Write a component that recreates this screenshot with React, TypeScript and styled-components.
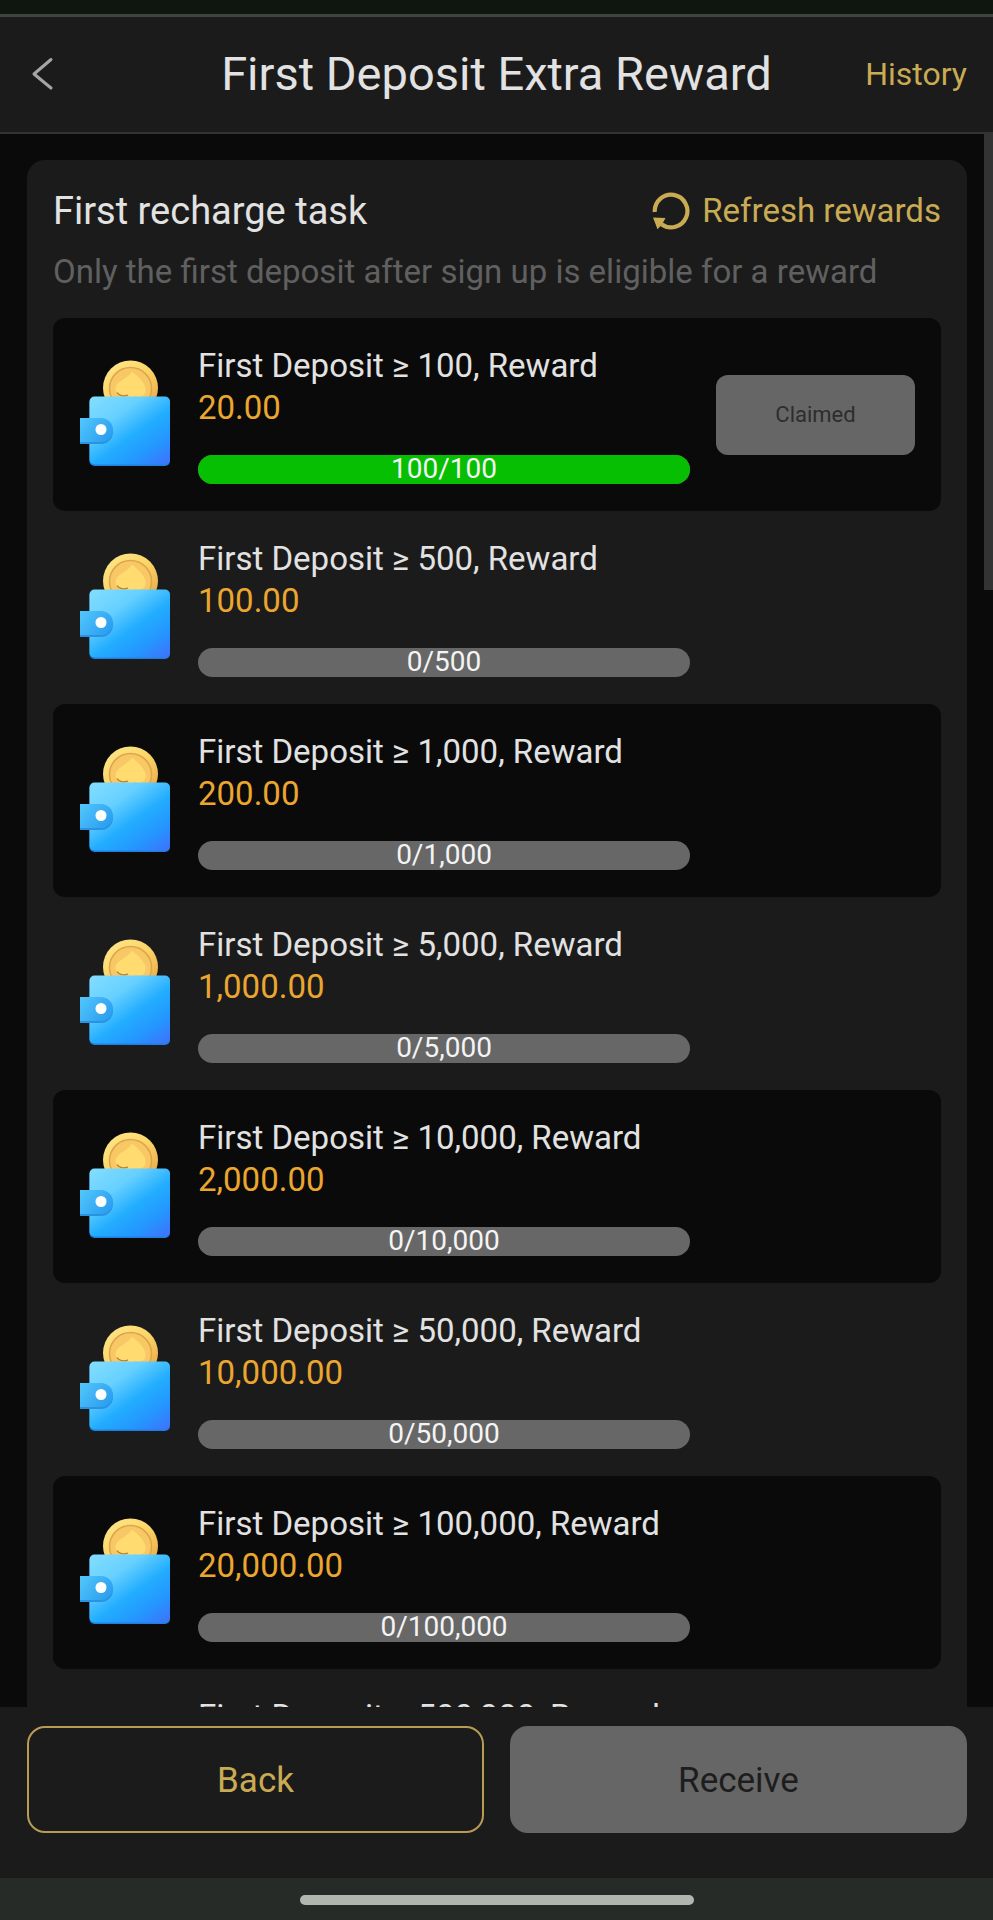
import React from 'react';
import styled, { createGlobalStyle } from 'styled-components';

const color = {
  page: '#0a0a0a',
  surface: '#1b1b1b',
  text: '#e2e2e2',
  muted: '#606060',
  gold: '#c9ab54',
  amount: '#eba62f',
  disabled: '#666666',
  track: '#676767',
  done: '#06bf02',
};

const GlobalStyle = createGlobalStyle`
  * { box-sizing: border-box; }
  body {
    margin: 0;
    background: ${color.page};
    color: ${color.text};
    font-family: Roboto, "Liberation Sans", sans-serif;
  }
  button { font-family: inherit; }
  h1, h2, p, ul { margin: 0; padding: 0; font-weight: 400; }
`;

const Screen = styled.div`
  display: flex;
  flex-direction: column;
  height: 100vh;
`;

const StatusStrip = styled.div`
  flex: none;
  height: 17px;
  background: #0f150f;
  border-bottom: 3px solid #40443f;
`;

const Header = styled.header`
  flex: none;
  display: grid;
  grid-template-columns: 1fr auto 1fr;
  align-items: center;
  height: 117px;
  padding: 0 26px 2px;
  background: ${color.surface};
  border-bottom: 2px solid #333333;
`;

const Title = styled.h1`
  font-size: 47px;
  line-height: 56px;
`;

const IconButton = styled.button`
  justify-self: start;
  display: flex;
  padding: 0;
  border: 0;
  background: none;
  color: #a5a5a5;
`;

const HistoryLink = styled.a`
  justify-self: end;
  color: ${color.gold};
  font-size: 32px;
  line-height: 42px;
  text-decoration: none;
`;

const Content = styled.main`
  position: relative;
  flex: 1;
  min-height: 0;
`;

const Scroller = styled.div`
  height: 100%;
  padding: 26px 26px 26px 27px;
  overflow-y: auto;
  scrollbar-width: none;
`;

const ScrollThumb = styled.div`
  position: absolute;
  top: 0;
  right: 0;
  width: 9px;
  height: 29%;
  background: #333333;
`;

const Card = styled.section`
  padding: 26px;
  background: ${color.surface};
  border-radius: 18px;
`;

const CardHead = styled.div`
  display: flex;
  align-items: center;
  justify-content: space-between;
`;

const CardTitle = styled.h2`
  font-size: 38px;
  line-height: 50px;
`;

const RefreshButton = styled.button`
  display: flex;
  align-items: center;
  gap: 12px;
  padding: 0;
  border: 0;
  background: none;
  color: ${color.gold};
  font-size: 33px;
  line-height: 42px;
`;

const Note = styled.p`
  margin: 15px 0 25px;
  color: ${color.muted};
  font-size: 33px;
  line-height: 42px;
`;

const TaskList = styled.ul`
  list-style: none;
`;

const TaskRow = styled.li`
  display: grid;
  grid-template-columns: 93px 1fr 199px;
  gap: 26px;
  align-items: center;
  padding: 27px 26px;
  border-radius: 12px;

  &:nth-child(odd) {
    background: ${color.page};
  }
`;

const TaskText = styled.p`
  font-size: 33px;
  line-height: 42px;
  white-space: nowrap;
`;

const Amount = styled(TaskText)`
  color: ${color.amount};
`;

const Bar = styled.div`
  display: grid;
  height: 29px;
  margin-top: 26px;
  border-radius: 15px;
  background: ${color.track};

  > * { grid-area: 1 / 1; }
`;

const BarFill = styled.div`
  border-radius: 15px;
  background: ${color.done};
`;

const BarLabel = styled.span`
  color: #f4f4f4;
  font-size: 28px;
  line-height: 27px;
  text-align: center;
`;

const ClaimButton = styled.button`
  height: 80px;
  border: 0;
  border-radius: 12px;
  background: ${color.disabled};
  color: #2d2d2d;
  font-size: 22px;
`;

const Footer = styled.footer`
  flex: none;
  display: grid;
  grid-template-columns: 1fr 1fr;
  gap: 26px;
  padding: 19px 26px 45px 27px;
  background: ${color.surface};
`;

const FooterButton = styled.button<{ $primary?: boolean }>`
  height: 107px;
  padding-top: 3px;
  border: 2px solid ${(p) => (p.$primary ? color.disabled : '#b89b55')};
  border-radius: 18px;
  background: ${(p) => (p.$primary ? color.disabled : 'transparent')};
  color: ${(p) => (p.$primary ? '#1d1d1d' : color.gold)};
  font-size: 35px;
`;

const SystemBar = styled.div`
  flex: none;
  display: flex;
  justify-content: center;
  height: 42px;
  padding-top: 17px;
  background: #272b27;
`;

const HomePill = styled.div`
  width: 394px;
  height: 10px;
  border-radius: 5px;
  background: #b2b6b0;
`;

const BackIcon = () => (
  <svg width="32" height="40" viewBox="0 0 32 40" fill="none" stroke="currentColor" strokeWidth="3" strokeLinecap="round" strokeLinejoin="round" aria-hidden="true">
    <path d="M25 5.500 8 20 25 34" />
  </svg>
);

const RefreshIcon = () => (
  <svg width="38" height="38" viewBox="0 0 38 38" aria-hidden="true">
    <path d="M2.800 20A16.300 16.300 0 1 1 9.500 32.200" fill="none" stroke="currentColor" strokeWidth="4.200" />
    <path d="M1 25.500 13.500 26 11.500 29.800 9 33.500 5.500 37.300Z" fill="currentColor" />
  </svg>
);

const WalletDefs = () => (
  <svg width="0" height="0" display="block" aria-hidden="true">
    <defs>
      <linearGradient id="leather" x1="0.1" y1="0" x2="0.95" y2="1">
        <stop offset="0" stopColor="#7fdcff" />
        <stop offset="0.28" stopColor="#67d0ff" />
        <stop offset="0.55" stopColor="#22adff" />
        <stop offset="0.78" stopColor="#2496ff" />
        <stop offset="1" stopColor="#3d74fb" />
      </linearGradient>
      <linearGradient id="flap" x1="0" y1="0" x2="1" y2="0.6">
        <stop offset="0" stopColor="#52c8fb" />
        <stop offset="1" stopColor="#2d9ff0" />
      </linearGradient>
      <linearGradient id="coinRim" x1="0" y1="0" x2="0.8" y2="1">
        <stop offset="0" stopColor="#ffe98c" />
        <stop offset="0.5" stopColor="#fbd568" />
        <stop offset="1" stopColor="#e9a544" />
      </linearGradient>
    </defs>
  </svg>
);

const WalletIcon = () => (
  <svg width="93" height="117" viewBox="0 1 93 117" aria-hidden="true">
    <circle cx="51.500" cy="33" r="27.500" fill="url(#coinRim)" />
    <circle cx="51.500" cy="33.500" r="21" fill="#f8c766" stroke="#dfa549" strokeWidth="1.500" />
    <path d="M53 16.500C57 20 68 28 66.500 36.500C65.500 42 59 43 55 40.500L57 46H47L49 40.500C44 43 37 41 36.500 34.500C36.500 26 49 24 53 16.500Z" fill="#ffdb70" />
    <path d="M38 37.500C40 41 45 41.500 49 40" fill="none" stroke="#b57c2c" strokeWidth="1.300" />
    <rect x="10.500" y="42.500" width="80.500" height="68.500" rx="5" fill="#1f7fe0" />
    <rect x="10.500" y="41.500" width="80.500" height="68" rx="5" fill="url(#leather)" />
    <path d="M1 65H22a11.500 11.500 0 0 1 0 24H1Z" fill="#2a92e2" />
    <path d="M1 63H22a11.800 11.800 0 0 1 0 24H1Z" fill="url(#flap)" />
    <circle cx="22" cy="74.500" r="5.500" fill="#ffffff" />
  </svg>
);

interface Task {
  goal: number;
  reward: number;
  paid: number;
}

const tasks: Task[] = [
  { goal: 100, reward: 20, paid: 100 },
  { goal: 500, reward: 100, paid: 0 },
  { goal: 1000, reward: 200, paid: 0 },
  { goal: 5000, reward: 1000, paid: 0 },
  { goal: 10000, reward: 2000, paid: 0 },
  { goal: 50000, reward: 10000, paid: 0 },
  { goal: 100000, reward: 20000, paid: 0 },
  { goal: 500000, reward: 100000, paid: 0 },
];

const count = (n: number) => n.toLocaleString('en-US');
const money = (n: number) => n.toLocaleString('en-US', { minimumFractionDigits: 2 });

const TaskItem = ({ goal, reward, paid }: Task) => (
  <TaskRow>
    <WalletIcon />
    <div>
      <TaskText>{`First Deposit ≥ ${count(goal)}, Reward`}</TaskText>
      <Amount>{money(reward)}</Amount>
      <Bar role="progressbar" aria-valuemin={0} aria-valuemax={goal} aria-valuenow={paid} aria-label="Deposit progress">
        <BarFill style={{ width: `${(paid / goal) * 100}%` }} />
        <BarLabel>{`${count(paid)}/${count(goal)}`}</BarLabel>
      </Bar>
    </div>
    {paid >= goal && <ClaimButton type="button" disabled>Claimed</ClaimButton>}
  </TaskRow>
);

export default function App() {
  return (
    <Screen>
      <GlobalStyle />
      <StatusStrip />
      <Header>
        <IconButton type="button" aria-label="Go back">
          <BackIcon />
        </IconButton>
        <Title>First Deposit Extra Reward</Title>
        <HistoryLink href="#history">History</HistoryLink>
      </Header>
      <Content>
        <Scroller>
          <WalletDefs />
          <Card>
            <CardHead>
              <CardTitle>First recharge task</CardTitle>
              <RefreshButton type="button">
                <RefreshIcon />
                Refresh rewards
              </RefreshButton>
            </CardHead>
            <Note>Only the first deposit after sign up is eligible for a reward</Note>
            <TaskList>
              {tasks.map((task) => (
                <TaskItem key={task.goal} {...task} />
              ))}
            </TaskList>
          </Card>
        </Scroller>
        <ScrollThumb />
      </Content>
      <Footer>
        <FooterButton type="button">Back</FooterButton>
        <FooterButton type="button" $primary disabled>Receive</FooterButton>
      </Footer>
      <SystemBar>
        <HomePill />
      </SystemBar>
    </Screen>
  );
}
